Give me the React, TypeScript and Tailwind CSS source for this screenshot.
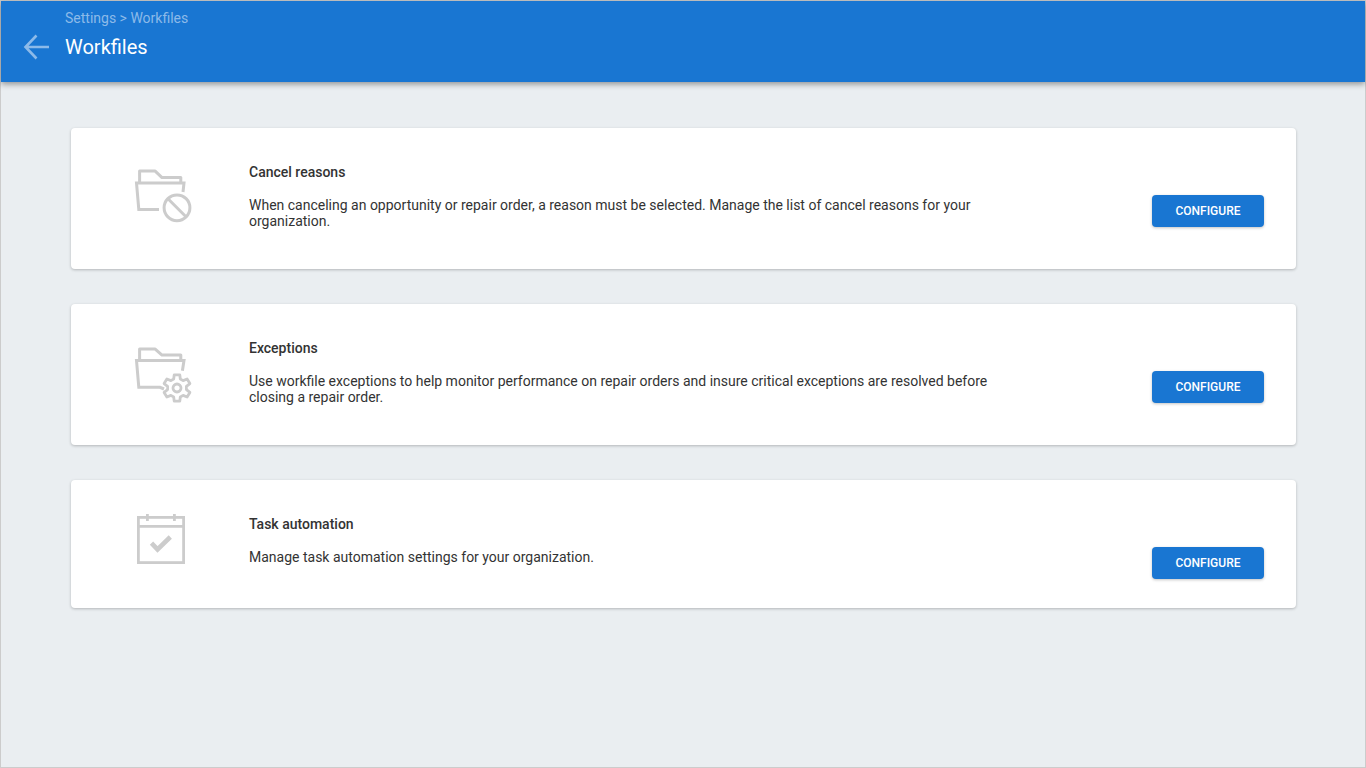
import type { ReactNode } from 'react';

interface SettingCardProps {
    title: string;
    description: string;
    icon: ReactNode;
}

const CancelIcon = () => (
    <svg width="60" height="60" viewBox="0 0 60 60" fill="none" stroke="#cccccc" strokeWidth="3" aria-hidden="true">
        <path d="M5.6 16V4.1H21.2L28 10.6H46.8V16" strokeLinejoin="round" />
        <path d="M49 25L50 16H2.5L4.8 42.5H25" />
        <circle cx="43" cy="40.8" r="12.9" />
        <path d="M34 31.8L52 49.8" />
    </svg>
);

const ExceptionsIcon = () => (
    <svg width="60" height="60" viewBox="0 0 60 60" fill="none" stroke="#cccccc" strokeWidth="3" aria-hidden="true">
        <path d="M5.6 15.5V4.1H21.2L28 10.1H46.8V15.5" strokeLinejoin="round" />
        <path d="M48.4 25.7L50 15.5H2.5L4.8 42.3H26L30 44" />
        <g transform="translate(43 43)" strokeWidth="2.8" strokeLinejoin="round">
            <path d="M-3.3-9L-2.8-13.1H2.8L3.3-9L6.1-7.4L10.1-9L12.9-4.4L9.4-1.6V1.6L12.9 4.4L10.1 9L6.1 7.4L3.3 9L2.8 13.1H-2.8L-3.3 9L-6.1 7.4L-10.1 9L-12.9 4.4L-9.4 1.6V-1.6L-12.9-4.4L-10.1-9L-6.1-7.4Z" />
            <circle r="4" />
        </g>
    </svg>
);

const TaskIcon = () => (
    <svg width="60" height="60" viewBox="0 0 60 60" fill="none" stroke="#cccccc" strokeWidth="2.8" aria-hidden="true">
        <rect x="4.4" y="5.4" width="45.2" height="45.2" />
        <path d="M4 14.3H50M13.4 2V9M40.4 2V9" />
        <path d="M17.5 31.2L23.5 37.4L36.3 25" strokeWidth="4.6" />
    </svg>
);

function SettingCard({ title, description, icon }: SettingCardProps) {
    return (
        <section className="flex min-h-32 items-start rounded bg-white pt-9 pr-8 pb-7 pl-[63px] shadow-[0_1px_3px_rgba(0,0,0,0.24)]">
            {icon}
            <div className="ml-[55px] flex-1 pb-3">
                <h2 className="font-medium">{title}</h2>
                <p className="mt-[17px] max-w-[760px]">{description}</p>
            </div>
            <button
                type="button"
                className="mt-[31px] h-8 w-28 shrink-0 rounded bg-[#1976d2] text-xs font-medium text-white shadow-[0_1px_3px_rgba(0,0,0,0.24)]"
            >
                CONFIGURE
            </button>
        </section>
    );
}

export default function App() {
    return (
        <div className="min-h-screen border border-[#cccccc] bg-[#eaeef1] font-[Roboto,sans-serif] text-sm leading-4 text-[#333333]">
            <header className="flex h-[81px] items-start bg-[#1976d2] pl-[22px] text-white shadow-[0_2px_6px_rgba(0,0,0,0.4)]">
                <button type="button" aria-label="Back" className="mt-8">
                    <svg width="28" height="28" viewBox="0 0 28 28" fill="none" stroke="#8cbae9" strokeWidth="2.6">
                        <path d="M26 14H2.5M13.5 2.5L2.5 14L13.5 25.5" />
                    </svg>
                </button>
                <div className="ml-[14px] pt-[9px]">
                    <nav aria-label="Breadcrumb" className="text-[#8cbae9]">
                        <a href="#settings">Settings</a> &gt; <a href="#workfiles">Workfiles</a>
                    </nav>
                    <h1 className="mt-[9px] text-xl leading-6">Workfiles</h1>
                </div>
            </header>

            <main className="flex flex-col gap-[35px] pt-[46px] pr-[69px] pb-10 pl-[70px]">
                <SettingCard
                    title="Cancel reasons"
                    description="When canceling an opportunity or repair order, a reason must be selected. Manage the list of cancel reasons for your organization."
                    icon={<div className="mt-[3px]"><CancelIcon /></div>}
                />
                <SettingCard
                    title="Exceptions"
                    description="Use workfile exceptions to help monitor performance on repair orders and insure critical exceptions are resolved before closing a repair order."
                    icon={<div className="mt-[5px]"><ExceptionsIcon /></div>}
                />
                <SettingCard
                    title="Task automation"
                    description="Manage task automation settings for your organization."
                    icon={<div className="-mt-1"><TaskIcon /></div>}
                />
            </main>
        </div>
    );
}
